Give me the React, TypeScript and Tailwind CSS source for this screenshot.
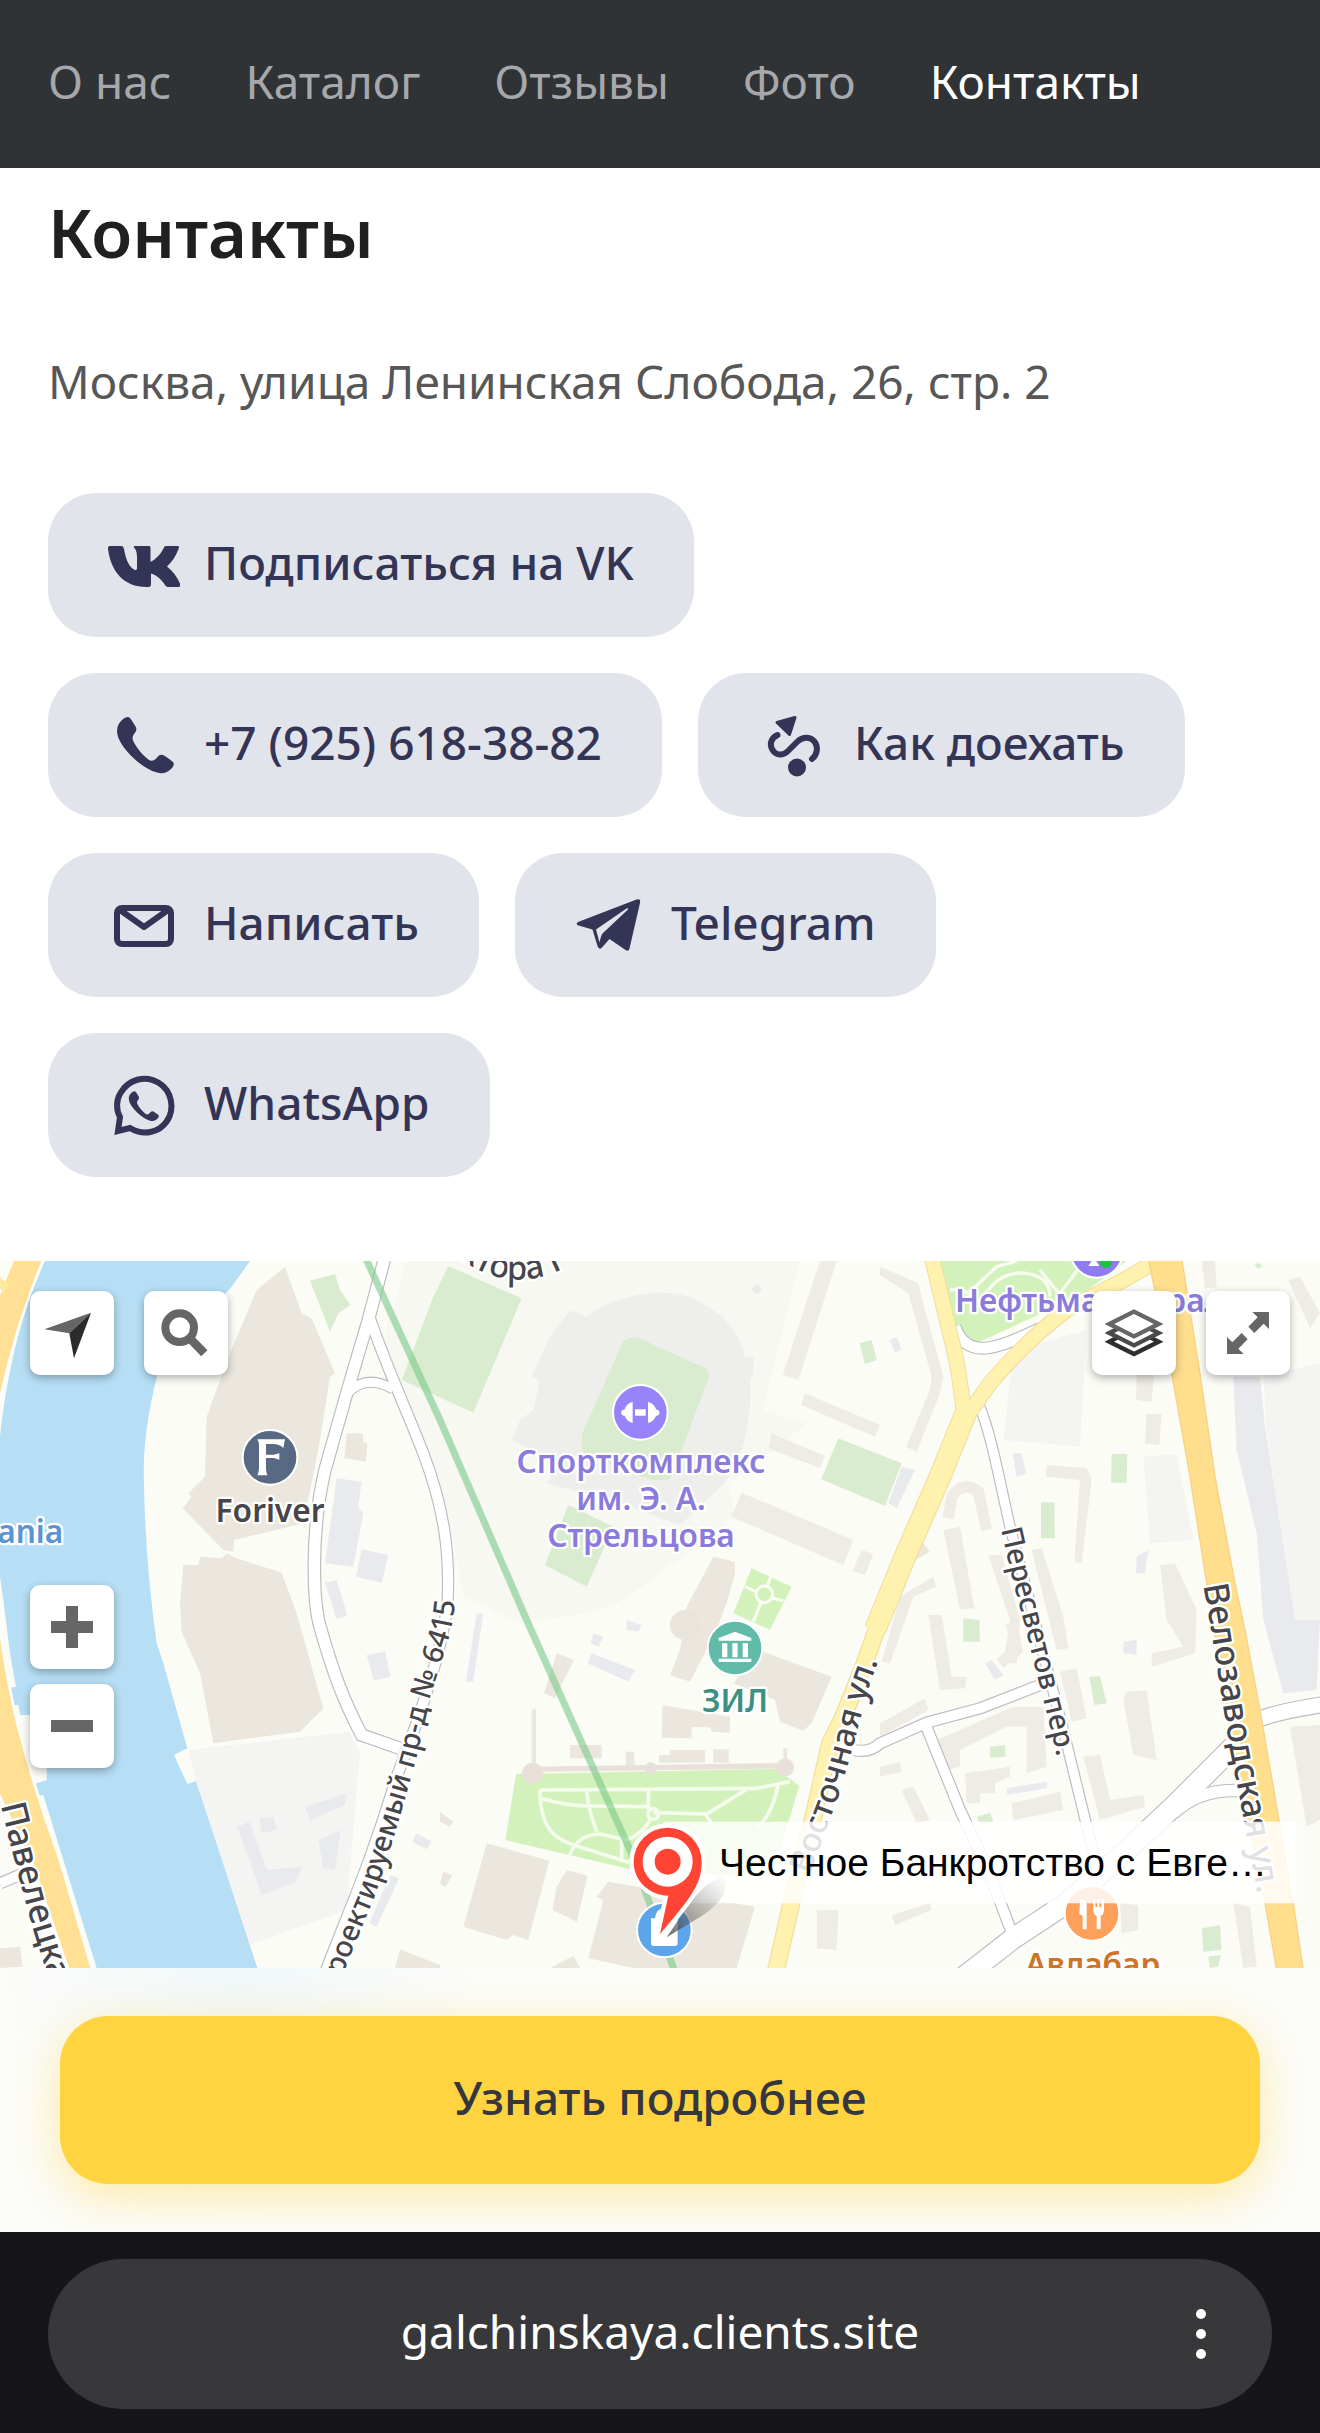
import type { ReactNode } from "react";

const NAV = ["О нас", "Каталог", "Отзывы", "Фото", "Контакты"];

const PHONE_PATH =
  "M20 8C22 8 23.500 11 26 15C28 18 29 20 28 22C27 24.500 24.500 26 24.500 29C24.500 34 34 46 41 51C44 53 47 51 49.500 48C51.500 45.500 53.500 45 56 46.500C59 48.500 63 51 65 53C67 55 65 58 63 60C59 64 54 65 49 63.500C34 60 15 41 10.500 29C8 22 8.500 16 14 11C16 9 18 8 20 8Z";

function Glyph({ children }: { children: ReactNode }) {
  return (
    <svg viewBox="0 0 72 72" className="size-[72px] shrink-0" fill="currentColor" aria-hidden="true">
      {children}
    </svg>
  );
}

const ACTIONS: { label: string; icon: ReactNode }[] = [
  {
    label: "Подписаться на VK",
    icon: (
      <path d="M2 17H13C15 17 15.500 18 16 20C18 32 22 39 27 41C28 41 29 41 29 39V29C29 23 28 21 26 18.500C25.500 17.500 26 17 27 17H41C42 17 42.500 17.500 42.500 19V33C48 30 53 25 56 18.500C56.500 17.300 57.500 17 59 17H69C71 17 71.500 18 70.500 20C68 27 64 33 59 37.500C65 42 69 48 72 54.500C72.600 57 72 58 70 58H61C59 58 58 57.500 57 56C53 50 49 46.500 43 44.500V55C43 57.500 42 58 39 58C15 58 3 42 0 20C-.2 18 .5 17 2 17Z" />
    ),
  },
  { label: "+7 (925) 618-38-82", icon: <path d={PHONE_PATH} /> },
  {
    label: "Как доехать",
    icon: (
      <>
        <path d="M19 13.500L37 8.500L31.500 25.500Z" stroke="currentColor" strokeWidth="3" strokeLinejoin="round" />
        <path
          d="M19.500 26C13 29 11.500 35 14 40C17.500 47 25 47 30 42L39 33C44 28 51 27 56 32C61 38 59 46 54 50"
          fill="none"
          stroke="currentColor"
          strokeWidth="6"
          strokeLinecap="round"
        />
        <circle cx="39" cy="58.500" r="9" />
      </>
    ),
  },
  {
    label: "Написать",
    icon: (
      <g fill="none" stroke="currentColor" strokeWidth="6" strokeLinejoin="round">
        <rect x="9" y="19" width="54" height="36" rx="5" />
        <path d="M12 21L36 38L60 21" />
      </g>
    ),
  },
  {
    label: "Telegram",
    icon: (
      <path
        fillRule="evenodd"
        d="M61.500 10.500Q66 9 65 14L54.500 59.500Q53.500 63 50.500 61L34.500 50L26.500 59Q24 61 22.500 57L17.500 40.500L3.500 36.500Q0 35 3 33ZM21 40.500L24.500 53.500Q26 46 28 44L53 20.500Q54 18.500 51.500 19.500Z"
      />
    ),
  },
  {
    label: "WhatsApp",
    icon: (
      <>
        <path
          d="M12 48C8 41 8 31 12.500 24C20 11 37 5 51 14C64 22 67 40 59 52C51 64 35 67 22 59L10 62Z"
          fill="none"
          stroke="currentColor"
          strokeWidth="6"
        />
        <path d={PHONE_PATH} transform="translate(16 18) scale(.53)" />
      </>
    ),
  },
];

function MapButton({ label, viewBox, children }: { label: string; viewBox: string; children: ReactNode }) {
  return (
    <button
      type="button"
      aria-label={label}
      className="size-[84px] shrink-0 rounded-[10px] bg-white shadow-[0_3px_8px_rgba(0,0,0,0.3)]"
    >
      <svg viewBox={viewBox} className="size-full" aria-hidden="true">
        {children}
      </svg>
    </button>
  );
}

const TAN = [
  "855,50 770,120 690,310 620,500 615,680 565,730 575,740 548,775 670,900 700,905 702,870 910,820 955,600 990,380 1005,370 935,205 905,190",
  "550,945 595,945 600,920 665,925 680,910 710,925 845,968 890,1090 970,1375 900,1445 640,1480 600,1270 545,1145 540,1060",
  "1040,550 1088,550 1090,575 1102,578 1098,635 1033,625",
  "1460,1780 1648,1832 1585,2070 1540,2055 1520,2070 1390,2030",
  "1700,1860 1763,1877 1730,2015 1658,1980 1670,1910",
  "1825,1895 2265,1970 2210,2154 1900,2154 1765,2125 1810,1950 1790,1940",
  "1720,2118 1740,2154 1650,2154",
  "1200,2098 1320,2145 1320,2154 1185,2154",
  "1320,1685 1360,1715 1350,1730 1320,1715",
  "1330,1865 1358,1875 1335,1912 1320,1900",
  "1670,1210 1722,1230 1665,1345 1632,1330",
  "1710,1485 1805,1485 1805,1525 1710,1525",
  "1877,1505 1903,1505 1903,1552 1877,1552",
  "1977,1515 2010,1515 2010,1500 2115,1500 2115,1538 1977,1538",
  "2140,1498 2186,1498 2186,1538 2140,1538",
  "1988,1365 2190,1400 2190,1448 2135,1445 2130,1432 2075,1432 2075,1465 1985,1463",
  "1595,1378 1608,1378 1608,1550 1595,1550",
  "2350,1495 2361,1495 2361,1540 2350,1540",
  "2275,1200 2495,1280 2435,1420 2410,1442 2340,1415 2325,1350 2200,1300",
  "2140,920 2205,935 2205,970 2180,1060 2145,1150 2070,1295 2010,1275 2040,1200 2060,1070",
  "0,2095 60,2090 68,2150 0,2154",
  "2750,850 2789,905 2745,930",
];

const TAN_LIGHT = [
  "2460,33 2510,33 2395,390 2348,375",
  "2415,430 2640,525 2625,560 2403,465",
  "2315,550 2475,618 2460,655 2305,595",
  "2225,728 2560,870 2530,945 2193,800",
  "2585,900 2620,912 2595,975 2558,962",
  "2640,50 2755,100 2775,180 2830,380 2820,430 2750,605 2718,590 2790,420 2795,380 2725,130 2640,75",
  "3410,370 3462,370 3455,455 3408,450",
  "3440,492 3485,492 3478,585 3435,580",
  "3140,645 3260,655 3275,690 3245,940 3223,935 3240,690 3138,680",
  "2830,840 2880,830 2923,1075 2880,1078",
  "2965,915 3005,915 3060,1110 3050,1240 3010,1240 3030,1110",
  "3095,900 3125,895 3190,1100 3205,1195 3170,1200",
  "3480,945 3525,940 3590,1080 3585,1210 3455,1250 3455,1210 3550,1190 3500,1110",
  "2700,1040 2800,980 2808,1010 2740,1040 2670,1240 2645,1235",
  "3865,90 3900,80 3960,190 3930,235",
  "3605,33 3645,33 3650,115 3615,115",
  "2785,1095 2825,1095 2855,1280 2900,1280 2895,1315 2820,1320",
  "3380,1325 3440,1320 3470,1530 3400,1515 3370,1350",
  "3180,1265 3230,1255 3260,1405 3215,1415",
  "3870,1430 3960,1425 3960,1710 3920,1730",
  "2810,1470 3040,1370 3130,1370 3140,1550 3080,1570 3080,1430 3020,1430 2880,1500 2880,1550 2840,1560",
  "2640,1420 2775,1345 2785,1380 2640,1460",
  "2640,1550 2700,1535 2705,1565 2640,1580",
  "2895,1570 3030,1550 3030,1580 2985,1600 2985,1630 2940,1630 2940,1660 2900,1660",
  "3035,1660 3180,1625 3190,1680 3040,1710",
  "3250,1520 3300,1515 3330,1650 3430,1635 3435,1670 3300,1710",
  "2705,1620 2740,1610 2790,1710 2750,1720",
  "2675,1995 2790,1960 2795,1980 2685,2025",
  "3360,1960 3415,1965 3415,2040 3365,2050",
  "3700,1960 3750,1970 3770,2150 3730,2154",
  "2450,1980 2515,1980 2510,2100 2450,2095",
];

const GREY = [
  "1010,685 1085,695 1075,770 1090,790 1060,950 975,940",
  "1085,898 1165,915 1145,998 1068,980",
  "975,998 1010,990 1042,1095 1010,1108",
  "1100,1215 1155,1205 1172,1280 1122,1292",
  "1170,1875 1197,1885 1130,2030 1108,2020",
  "1250,1750 1295,1775 1280,1798 1236,1775",
  "915,1670 1040,1630 1035,1665 930,1710",
  "955,1770 1022,1740 1005,1860 970,1855",
  "712,1730 748,1715 800,1860 905,1850 890,1895 785,1935",
  "780,1705 820,1700 830,1740 785,1750",
  "1775,1210 1905,1260 1885,1295 1762,1240",
  "1430,1090 1450,1090 1420,1295 1398,1295",
  "1780,1150 1810,1160 1795,1190 1772,1180",
  "1880,1110 1925,1125 1915,1145 1880,1140",
  "2705,650 2745,660 2690,775 2665,760",
  "3700,380 3780,380 3795,530 3885,1110 3960,1110 3950,1320 3850,1330 3790,1110 3770,850 3710,600",
  "2668,270 2690,262 2705,298 2685,308",
  "3038,612 3065,608 3078,670 3050,680",
  "3020,1615 3140,1595 3140,1615 3020,1635",
  "3370,1175 3410,1170 3410,1215 3370,1210",
  "3410,920 3445,900 3435,970 3408,970",
  "2955,1240 2975,1230 3010,1275 2985,1290",
];

const GREEN = [
  "930,92 1005,72 1020,120 1052,165 1015,190 990,245",
  "1345,48 1565,145 1420,488 1205,390 1300,140",
  "1705,765 1840,830 1760,1010 1635,945",
  "2515,565 2705,640 2655,768 2463,688",
  "2578,280 2615,270 2630,330 2595,343",
  "3335,612 3382,612 3380,698 3333,698",
  "3123,757 3163,757 3165,865 3123,865",
  "2890,1105 2938,1110 2940,1175 2890,1175",
  "3268,1280 3300,1278 3320,1360 3283,1365",
  "2970,1490 3015,1485 3017,1520 2970,1523",
  "2930,1700 2970,1688 2980,1715 2940,1725",
  "3605,2035 3660,2025 3665,2100 3610,2105",
  "3625,2120 3662,2115 3655,2150 3630,2154",
  "3763,45 3775,38 3788,48 3775,58",
];

const LANES = [
  { d: "M1155 20L1105 210L1040 430L975 660C930 850 940 1060 960 1130C1000 1270 1030 1350 1085 1455L1200 1495", w: 34 },
  { d: "M1105 190C1150 330 1220 480 1270 610C1330 770 1350 900 1343 1050C1330 1200 1260 1400 1190 1580C1110 1850 1030 2020 975 2170", w: 30 },
  { d: "M1042 430Q1100 370 1180 418", w: 26 },
  { d: "M2935 460C2970 540 2990 650 3030 830L3190 1440L3290 1850", w: 28 },
  { d: "M2560 1500Q2610 1510 2640 1480L2780 1418L2940 1375L3120 1305", w: 30 },
  { d: "M2775 1420L2880 1680L2960 1850L3040 2060", w: 30 },
  { d: "M2880 2190L3040 2065L3200 1960L3360 1820L3520 1670L3700 1490", w: 60 },
  { d: "M3520 1690Q3600 1615 3720 1622", w: 34 },
  { d: "M3770 1410Q3830 1385 3980 1362", w: 44 },
  { d: "M2865 230C2900 330 2990 300 3120 235", w: 32 },
  { d: "M0 1900L70 1870", w: 30 },
];

function CityMap() {
  return (
    <svg
      viewBox="0 33 3960 2121"
      preserveAspectRatio="xMidYMid slice"
      className="block h-full w-full"
      role="img"
      aria-label="Карта"
    >
      <defs>
        <path id="lbl-proekt" d="M1002 2240Q1065 2080 1120 1950Q1180 1780 1250 1520L1297 1320L1345 1170Q1368 1090 1372 940" />
        <path id="lbl-pavel" d="M2 1665L30 1780L75 1950L100 2040L150 2200L200 2400" />
        <path id="lbl-velo" d="M3610 1005L3628 1110L3665 1340L3690 1500L3720 1650L3745 1780L3800 2080" />
        <path id="lbl-peresvet" d="M3003 838L3040 1000L3075 1130L3105 1250L3145 1410L3190 1600" />
        <path id="lbl-vost" d="M2430 1875L2485 1720L2515 1640L2545 1540L2575 1430L2607 1310L2632 1240L2690 1050" />
        <path id="lbl-top" d="M1375 22Q1570 170 1790 -10" />
        <linearGradient id="pin-shade" x1="0" y1="1" x2="1" y2="0">
          <stop offset="0" stopColor="#333" stopOpacity=".75" />
          <stop offset="1" stopColor="#888" stopOpacity="0" />
        </linearGradient>
      </defs>
      <rect y="33" width="3960" height="2121" fill="#fcfcf7" />

      <path fill="#b6def5" d="M135 33H750L695 110C560 260 490 330 472 375Q425 560 432 700Q436 940 470 1180L490 1240L562 1495L522 1515L562 1602L590 1592L772 2154H290L130 1635L95 1640V1605L140 1590V1395L60 1395L55 1365L30 1365L25 1315L48 1310L30 1210L10 1050L0 980V560C20 380 60 190 135 33Z" />
      <path fill="#f4f5f2" d="M565 1500L1050 1445L1080 1510L1040 1980L750 2085L590 1600Z" />
      <path fill="#f7f8f2" d="M1220 33H2400L2290 480L2420 520L2190 700L2200 800Q2140 880 2000 950Q1880 1060 1780 1085L1560 1120L1390 1040Q1360 820 1270 560L1140 300Z" />
      <path fill="#eeefed" d="M1710 180L1760 200C1850 130 2000 110 2080 145C2190 200 2220 260 2235 320L2260 320V370L2250 390C2260 560 2200 690 2140 730L2040 825L1860 760L1640 700L1680 640L1535 570L1560 510L1600 480L1620 390L1595 380L1650 260Z" />
      <path fill="#f4f5f3" d="M3040 300L3260 240L3240 590L3010 570ZM3430 620L3530 612L3580 870L3450 880ZM3790 380L3960 340V1110H3880L3800 540Z" />
      <g fill="#ebe7de">{TAN.map((p) => <polygon key={p} points={p} />)}</g>
      <g fill="#efebe5">{TAN_LIGHT.map((p) => <polygon key={p} points={p} />)}</g>
      <g fill="#e9eaed">{GREY.map((p) => <polygon key={p} points={p} />)}</g>
      <g fill="#daecd0">{GREEN.map((p) => <polygon key={p} points={p} />)}</g>
      <path fill="none" stroke="#efebe5" strokeWidth="34" d="M2845 805L2855 740Q2890 690 2935 725L2960 840M3035 1120L3050 1200L3000 1240" />
      <path fill="#daecd0" stroke="#daecd0" strokeWidth="50" strokeLinejoin="round" d="M1905 287L2102 375L1995 665L1960 665L1770 590V560L1890 290Z" />
      <circle cx="2055" cy="1125" r="45" fill="#e9e5dd" />
      <circle cx="2270" cy="118" r="13" fill="#e9eaea" />

      <path fill="#d3f2bb" d="M2820 33H3380L3250 130L3060 220L2930 280L2890 270L2860 210Z" />
      <path fill="none" stroke="#f7fcef" strokeWidth="10" d="M2850 120Q2900 110 2920 150M2905 130L2990 50L3050 33M2950 140Q3000 60 3080 70Q3150 80 3150 140M3120 60L3200 160M3180 130L3240 50" />
      <path fill="#d3f2bb" d="M2255 955L2375 1010L2310 1140L2200 1090Z" />
      <g fill="none" stroke="#fbfdf5" strokeWidth="9">
        <circle cx="2293" cy="1033" r="25" />
        <path d="M2302 1008L2312 980M2268 1025L2235 1010M2318 1045L2350 1052M2283 1058L2260 1115" />
      </g>

      <path fill="#d3f2bb" d="M1548 1572L2325 1556L2375 1590L2398 1608L2340 1800L2230 1880L1890 1858L1516 1770Z" />
      <path stroke="#e8e0d9" strokeWidth="16" d="M1590 1558L2360 1547" />
      <g fill="#e8e0d9">
        <circle cx="1598" cy="1570" r="32" />
        <circle cx="1952" cy="1555" r="18" />
        <circle cx="2355" cy="1552" r="27" />
      </g>
      <g fill="none" stroke="#f5fbed" strokeWidth="11">
        <path d="M1620 1620L2270 1615L2370 1595M1620 1620C1620 1730 1660 1765 1720 1785L1890 1838M1760 1620C1765 1690 1780 1710 1790 1745M1622 1645Q1700 1668 1760 1668L1940 1670M1960 1688L2120 1692L2240 1618M1945 1620V1680M2335 1600Q2320 1690 2270 1735M1710 1815Q1730 1755 1800 1752L1880 1770Q1930 1750 1955 1702M2115 1692L2135 1720M1865 1770V1830" />
        <circle cx="1960" cy="1692" r="16" />
      </g>

      <g fill="none">
        {LANES.map((l) => <path key={l.d} d={l.d} stroke="#bcbcbf" strokeWidth={l.w + 7} />)}
        {LANES.map((l) => <path key={`${l.d}-fill`} d={l.d} stroke="#fff" strokeWidth={l.w} />)}
      </g>

      <path fill="#ffe094" stroke="#fff" strokeWidth="8" d="M40 25L-10 150V500Q40 240 132 25ZM-10 1060Q20 1300 60 1450Q110 1640 180 1830L277 2160H205L100 1850L-10 1620Z" />
      <path stroke="#ffe9a0" strokeWidth="26" d="M-10 90L20 115" />

      <g fill="none" strokeLinejoin="round">
        <g stroke="#f1dc9c">
          <path strokeWidth="48" d="M2795 20L2850 250Q2880 360 2892 500M3470 33L3380 85L3200 180Q3080 270 2970 400L2900 500" />
          <path strokeWidth="68" d="M2905 470L2820 680L2715 920L2625 1140" />
          <path strokeWidth="54" d="M2640 1110L2590 1250L2530 1400L2490 1480L2445 1680L2374 1960L2326 2170" />
        </g>
        <g stroke="#fff2ae">
          <path strokeWidth="42" d="M2795 20L2850 250Q2880 360 2892 500M3470 33L3380 85L3200 180Q3080 270 2970 400L2900 500" />
          <path strokeWidth="62" d="M2905 470L2820 680L2715 920L2625 1140" />
          <path strokeWidth="47" d="M2640 1110L2590 1250L2530 1400L2490 1480L2445 1680L2374 1960L2326 2170" />
        </g>
      </g>
      <path fill="#ffdf8e" stroke="#f9d182" strokeWidth="4" d="M3445 25L3515 370L3570 680L3620 1000L3700 1500L3795 1960L3830 2160H3910L3880 1960L3780 1380L3735 1140L3705 1000L3645 680L3600 370L3545 25Z" />
      <path fill="none" stroke="#7cc98a" strokeOpacity=".62" strokeWidth="21" d="M1095 20L1320 510L1580 1110L1890 1800L2030 2180" />

      <g fontFamily="'Noto Sans', sans-serif" fontWeight="500" stroke="#fff" strokeWidth="14" strokeLinejoin="round" paintOrder="stroke" fill="#45454a">
        <g fontSize="87">
          <text><textPath href="#lbl-proekt">Проектируемый пр-д № 6415</textPath></text>
          <text><textPath href="#lbl-peresvet">Пересветов пер.</textPath></text>
        </g>
        <g fontSize="104">
          <text><textPath href="#lbl-pavel">Павелецкая</textPath></text>
          <text><textPath href="#lbl-velo">Велозаводская ул.</textPath></text>
        </g>
        <g fontSize="99">
          <text><textPath href="#lbl-vost">Восточная ул.</textPath></text>
          <text><textPath href="#lbl-top">ктора Г</textPath></text>
        </g>
        <g fontSize="95" fontWeight="600" textAnchor="middle">
          <text x="810" y="815">Foriver</text>
          <text x="190" y="878" textAnchor="end" fill="#5b93d3">ania</text>
          <g fill="#8a7bdc">
            <text x="2865" y="187" textAnchor="start">Нефтьмагистраль</text>
            <text x="1923" y="670">Спорткомплекс</text>
            <text x="1923" y="780">им. Э. А.</text>
            <text x="1923" y="890">Стрельцова</text>
          </g>
          <text x="2205" y="1385" fill="#3d9080">ЗИЛ</text>
          <text x="3278" y="2179" fill="#cd7427">Авлабар</text>
        </g>
      </g>

      <g stroke="#fff" strokeWidth="6">
        <circle cx="3290" cy="5" r="78" fill="#8f7cf0" />
        <circle cx="810" cy="622" r="82" fill="#586984" />
        <circle cx="1921" cy="487" r="82" fill="#9783fa" />
        <circle cx="2205" cy="1194" r="82" fill="#62bba8" />
        <circle cx="1993" cy="2040" r="82" fill="#5da5eb" />
        <circle cx="3276" cy="1990" r="82" fill="#ff9f5c" />
      </g>
      <circle cx="3318" cy="36" r="18" fill="#18c43c" />
      <g fill="#fff">
        <path d="M3265 48L3282 22L3298 48Z" />
        <path d="M772 568H855L850 594Q838 582 820 582H798V614H822L838 610V629L822 624H798V655Q798 665 802 676H772Q777 665 777 655V585Q777 575 772 568Z" />
        <path d="M1898 455Q1878 462 1874 478Q1862 482 1864 488Q1862 494 1874 498Q1880 514 1898 519ZM1944 455Q1964 462 1968 478Q1980 482 1978 488Q1980 494 1968 498Q1962 514 1944 519ZM1905 478H1937V497H1905Z" />
        <path d="M2205 1145L2254 1164V1172H2156V1164ZM2166 1180H2182V1222H2166ZM2197 1180H2213V1222H2197ZM2228 1180H2244V1222H2228ZM2156 1226H2254V1236H2156Z" />
        <path d="M1953 2005H1965Q1968 1975 1993 1975Q2018 1975 2021 2005H2033V2080Q2033 2088 2025 2088H1961Q1953 2088 1953 2080Z" />
        <path d="M3240 1950Q3255 1945 3260 1960V2038H3248V1998L3238 1992ZM3280 1948H3286V1972H3292V1948H3298V1972H3304V1948H3312V1980Q3312 1994 3302 1998V2038H3290V1998Q3280 1994 3280 1980Z" />
      </g>

      <rect x="1990" y="1715" width="1900" height="245" fill="#fff" fillOpacity=".84" />
      <path fill="url(#pin-shade)" d="M2000 2062C2070 1960 2100 1900 2170 1880Q2200 1930 2110 1995Z" />
      <g stroke="#fff" strokeWidth="26" strokeLinejoin="round">
        <path d="M1980 2052L2005 1937C1945 1935 1901 1890 1901 1835A102 102 0 0 1 2105 1835C2105 1905 2070 1945 1980 2052Z" />
      </g>
      <path fill="#ff4433" d="M1980 2052L2005 1937C1945 1935 1901 1890 1901 1835A102 102 0 0 1 2105 1835C2105 1905 2070 1945 1980 2052Z" />
      <circle cx="2003" cy="1835" r="75" fill="#fff" />
      <circle cx="2003" cy="1835" r="39" fill="#ff4433" />
    </svg>
  );
}

export default function App() {
  return (
    <div className="min-h-screen bg-white font-['Noto_Sans',sans-serif]">
      <header className="bg-[#2f3336]">
        <nav className="flex h-[168px] items-center gap-[74px] px-12 pb-[6px] text-[46px] leading-[60px]" aria-label="Разделы">
          {NAV.map((item) => (
            <a
              key={item}
              href="#contacts"
              aria-current={item === "Контакты" ? "page" : undefined}
              className="whitespace-nowrap text-[#a6a8ab] aria-[current=page]:text-white"
            >
              {item}
            </a>
          ))}
        </nav>
      </header>

      <main>
        <section id="contacts" className="px-12 pt-[22px] pb-[84px]">
          <h1 className="text-[67px] leading-[84px] font-semibold text-[#202020]">Контакты</h1>
          <p className="mt-[77px] text-[46px] leading-[60px] text-[#575757]">
            Москва, улица Ленинская Слобода, 26, стр. 2
          </p>
          <div className="mt-[82px] flex flex-wrap gap-9">
            {ACTIONS.map(({ label, icon }) => (
              <button
                key={label}
                type="button"
                className="flex h-36 items-center gap-6 rounded-[48px] bg-[#e1e4ea] px-[60px] text-[46px] leading-[60px] font-medium whitespace-nowrap text-[#343556]"
              >
                <Glyph>{icon}</Glyph>
                <span className="pb-[6px]">{label}</span>
              </button>
            ))}
          </div>
        </section>

        <section className="relative h-[707px] overflow-hidden" aria-label="Карта проезда">
          <CityMap />
          <p className="absolute top-[580px] left-[719px] font-['Liberation_Sans',sans-serif] text-[39px] leading-[44px] whitespace-nowrap text-black">
            Честное Банкротство с Евге…
          </p>
          <div className="absolute inset-x-[30px] top-[30px] flex gap-[30px]">
            <MapButton label="Моё местоположение" viewBox="90 123 252 252">
              <path fill="#666" d="M133 238L273 188L208 250Z" />
              <path fill="#2b2b2b" d="M273 188L222 325L208 250Z" />
            </MapButton>
            <MapButton label="Поиск" viewBox="432 123 252 252">
              <circle cx="539" cy="233" r="43" fill="none" stroke="#666" strokeWidth="24" />
              <path d="M568 263L613 310" stroke="#666" strokeWidth="26" />
            </MapButton>
            <span className="grow" />
            <MapButton label="Слои" viewBox="636 123 252 252">
              <g fill="#fff" strokeWidth="13">
                <path stroke="#2f2f2f" d="M688 275L762 238L836 275L762 312Z" />
                <path stroke="#4a4a4a" d="M688 249L762 212L836 249L762 286Z" />
                <path stroke="#666" d="M688 222L762 185L836 222L762 259Z" />
              </g>
            </MapButton>
            <MapButton label="На весь экран" viewBox="978 123 252 252">
              <path
                fill="#666"
                d="M1167 186H1117L1133 202L1105 230L1123 249L1151 221L1167 237ZM1041 312H1091L1075 296L1103 268L1085 249L1057 277L1041 261Z"
              />
            </MapButton>
          </div>
          <div className="absolute top-[324px] left-[30px] flex flex-col gap-[15px]">
            <MapButton label="Приблизить" viewBox="0 0 252 252">
              <path fill="#666" d="M108 63H144V108H189V144H144V189H108V144H63V108H108Z" />
            </MapButton>
            <MapButton label="Отдалить" viewBox="0 0 252 252">
              <path fill="#666" d="M63 108H189V144H63Z" />
            </MapButton>
          </div>
        </section>

        <div className="h-[264px] bg-[radial-gradient(circle_at_18%_0%,#f1f8fb_0%,#fcfcf9_22%)] px-[60px] pt-12">
          <button
            type="button"
            className="h-[168px] w-full rounded-[48px] bg-[#ffd440] pb-[6px] text-[46px] leading-[60px] font-medium text-[#343640] shadow-[0_12px_48px_rgba(255,212,64,0.45)]"
          >
            Узнать подробнее
          </button>
        </div>
      </main>

      <footer className="relative bg-[#161618] px-12 pt-[27px] pb-6">
        <div className="relative flex h-[150px] items-center justify-center rounded-full bg-[#38383a]">
          <span className="pb-[6px] text-[46px] leading-[60px] text-white">galchinskaya.clients.site</span>
          <button
            type="button"
            aria-label="Меню"
            className="absolute right-[66px] flex flex-col gap-[10px]"
          >
            <span className="size-[10px] rounded-full bg-white" />
            <span className="size-[10px] rounded-full bg-white" />
            <span className="size-[10px] rounded-full bg-white" />
          </button>
        </div>
      </footer>
    </div>
  );
}
